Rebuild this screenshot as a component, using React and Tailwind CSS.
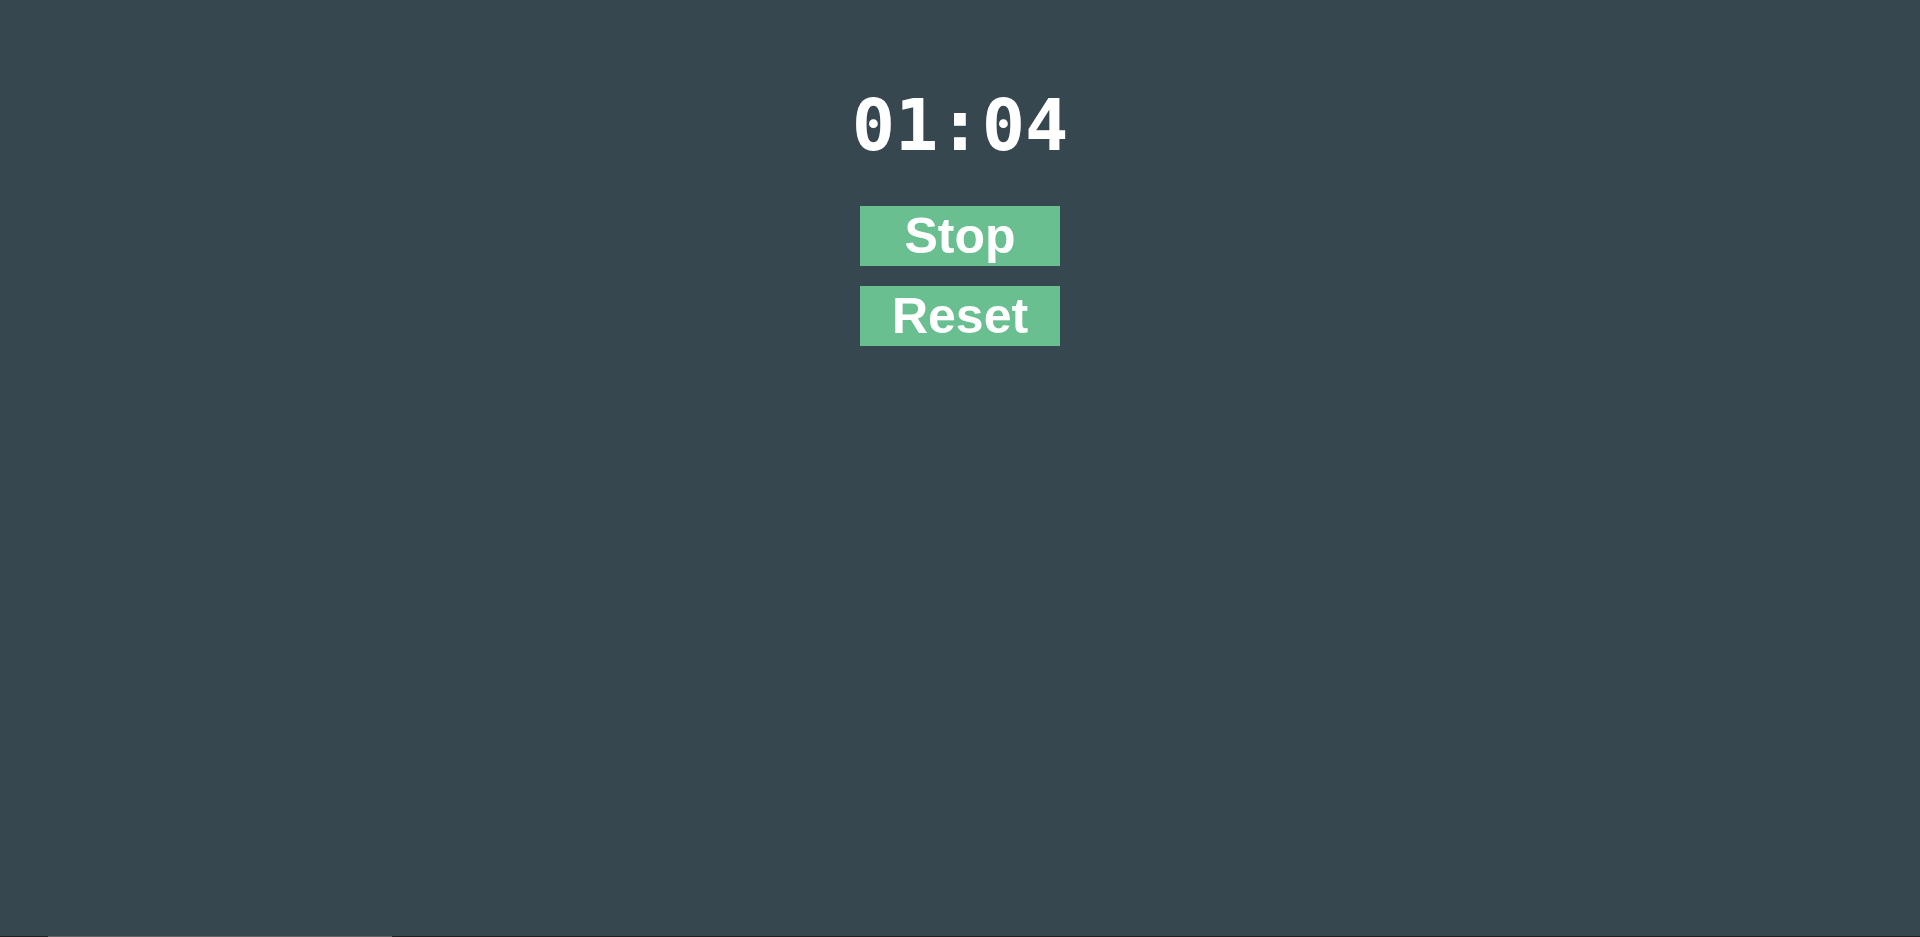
export default function App() {
  return (
    <div className="h-screen flex flex-col bg-[#37474f]">
      <main className="flex-1 flex flex-col items-center">
        <h1 className="mt-[80px] text-[72px] leading-[90px] font-bold text-white font-['DejaVu_Sans_Mono',monospace]">
          01:04
        </h1>
        <div className="mt-[36px] flex flex-col gap-[20px]">
          <button className="w-[200px] h-[60px] bg-[#6abf91] text-white text-[50px] leading-none font-bold font-['Liberation_Sans',Arial,sans-serif]">
            Stop
          </button>
          <button className="w-[200px] h-[60px] bg-[#6abf91] text-white text-[50px] leading-none font-bold font-['Liberation_Sans',Arial,sans-serif]">
            Reset
          </button>
        </div>
      </main>
      <div className="h-px flex bg-[#202020]">
        <div className="ml-[48px] w-[344px] bg-[#666666]" />
      </div>
    </div>
  );
}
